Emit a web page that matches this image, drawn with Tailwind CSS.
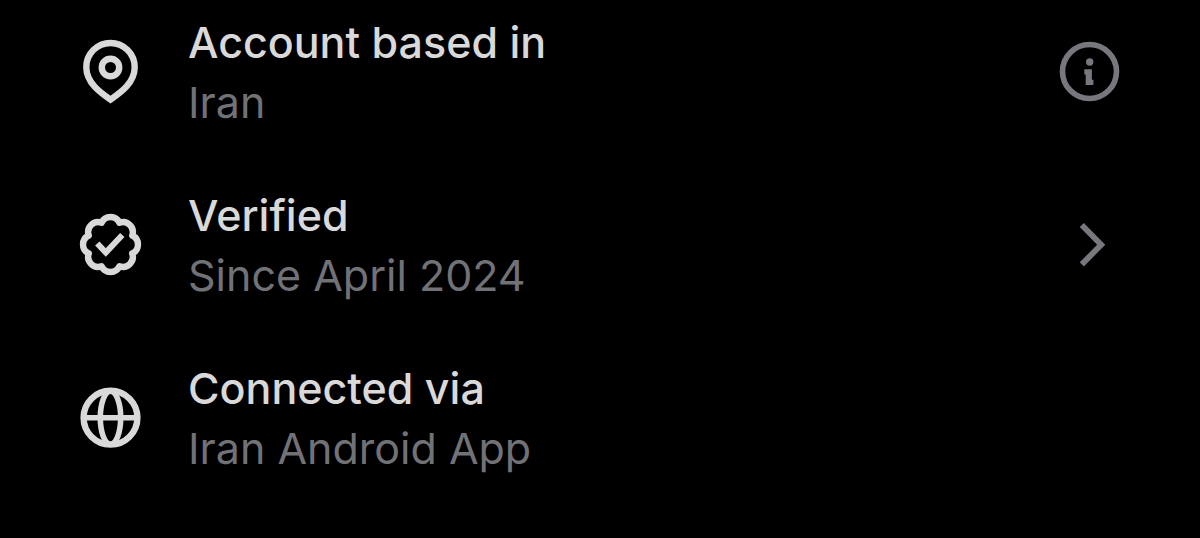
<!DOCTYPE html>
<html lang="en">
<head>
<meta charset="utf-8">
<meta name="viewport" content="width=device-width, initial-scale=1">
<title>About this account</title>
<script src="https://cdn.jsdelivr.net/npm/@tailwindcss/browser@4"></script>
</head>
<body class="min-h-screen bg-black font-['Inter',sans-serif] text-[43px] leading-[60px] text-[#d9d9d9]">
<main class="px-[70px] pt-3">
  <ul class="flex flex-col gap-[53px]">
    <li class="flex items-center gap-[38px]">
      <svg class="size-20 shrink-0" viewBox="0 2 80 80" fill="none" stroke="currentColor" stroke-width="6.4" aria-hidden="true">
        <path d="M40.5 69.6C31 63 16.3 53 16.3 37.2a24.2 24.2 0 0 1 48.4 0C64.7 53 50 63 40.5 69.6z"/>
        <circle cx="40.5" cy="37.5" r="8.7"/>
      </svg>
      <div class="min-w-0 flex-1">
        <h2 class="font-medium">Account based in</h2>
        <p class="text-[#717276]">Iran</p>
      </div>
      <button type="button" aria-label="More information" class="size-20 shrink-0 text-[#77787d]">
        <svg class="size-20" viewBox="0 0 80 80" fill="currentColor" aria-hidden="true">
          <circle cx="39.5" cy="39.5" r="27" fill="none" stroke="currentColor" stroke-width="5.6"/>
          <circle cx="39.7" cy="30" r="3.7"/>
          <path d="M34.3 37.3h7.6v10.400h1.500v5.200h-7.700v-10.300h-1.400z"/>
        </svg>
      </button>
    </li>
    <li class="flex items-center gap-[38px]">
      <svg class="size-20 shrink-0" viewBox="0 1 80 80" fill="none" stroke="currentColor" aria-hidden="true">
        <path stroke-width="6.4" stroke-linejoin="round" d="M62.2 31.5A9.900 9.900 0 0 1 62.200 49.500A9.900 9.900 0 0 1 49.500 62.200A9.900 9.900 0 0 1 31.500 62.200A9.900 9.900 0 0 1 18.800 49.500A9.900 9.900 0 0 1 18.800 31.500A9.900 9.900 0 0 1 31.500 18.800A9.900 9.900 0 0 1 49.500 18.800A9.900 9.900 0 0 1 62.200 31.500z"/>
        <path stroke-width="6" d="M27.300 39.500l8.500 9L52.300 31"/>
      </svg>
      <div class="min-w-0 flex-1">
        <h2 class="font-medium">Verified</h2>
        <p class="text-[#717276]">Since April 2024</p>
      </div>
      <button type="button" aria-label="Verification details" class="size-20 shrink-0 text-[#77787d]">
        <svg class="size-20" viewBox="0 1 80 80" fill="none" stroke="currentColor" stroke-width="5.800" aria-hidden="true">
          <path d="M31.800 21L51.200 40.700L31.800 60.400"/>
        </svg>
      </button>
    </li>
    <li class="flex items-center gap-[38px]">
      <svg class="size-20 shrink-0" viewBox="0 0 80 80" fill="none" stroke="currentColor" stroke-width="5.600" aria-hidden="true">
        <circle cx="40.500" cy="39.700" r="26.900" stroke-width="6.400"/>
        <ellipse cx="40.500" cy="39.700" rx="10.200" ry="26.500"/>
        <path d="M14 39.700h53"/>
      </svg>
      <div class="min-w-0 flex-1">
        <h2 class="font-medium">Connected via</h2>
        <p class="text-[#717276]">Iran Android App</p>
      </div>
    </li>
  </ul>
</main>
</body>
</html>
